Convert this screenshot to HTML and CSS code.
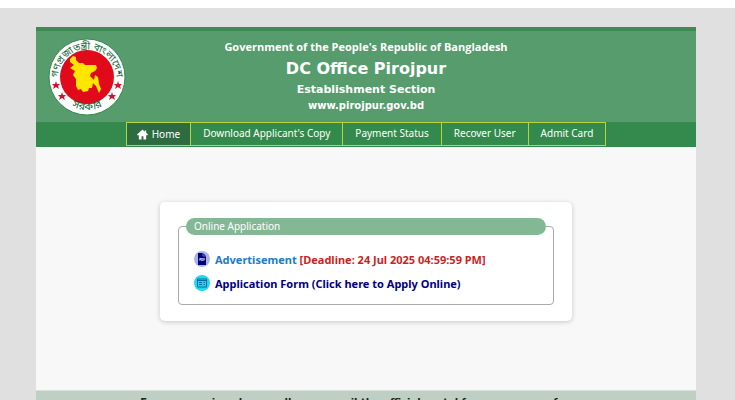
FILE: index.html
```html
<!DOCTYPE html>
<html lang="en">

<head>
    <meta charset="UTF-8">
    <title>DC Office Pirojpur</title>
    <link rel="stylesheet" href="styles.css">
</head>

<body>
    <div class="wrapper">
        <header class="header">
            <svg class="logo" viewBox="0 0 78 78" role="img" aria-label="Government seal of Bangladesh">
                <defs>
                    <path id="arc-top" d="M12 51 A29 29 0 1 1 66 51" />
                    <path id="arc-bottom" d="M14 61 A34 34 0 0 0 64 61" />
                </defs>
                <circle cx="39" cy="39" r="38" fill="#fff" stroke="#3d8a54" stroke-width="1" />
                <circle cx="39" cy="39" r="27" fill="#e00a1a" />
                <path d="M22 21 L25 18 L28 19 L28 22 L31 25 L35 25 L37 27 L48 27 L49 30 L47 33 L43 35 L42 38 L46 42 L47 37 L50 39 L51 46 L53 51 L51 55 L48 48 L45 45 L44 50 L41 50 L40 53 L35 54 L33 51 L30 52 L28 48 L28 41 L25 37 L27 33 L22 30 L26 27 L22 24 Z" fill="#ffe600" />
                <g class="seal-text">
                    <text><textPath href="#arc-top" startOffset="50%">গণপ্রজাতন্ত্রী বাংলাদেশ</textPath></text>
                    <text class="seal-bottom"><textPath href="#arc-bottom" startOffset="50%">সরকার</textPath></text>
                </g>
                <g fill="#d3122a">
                    <path id="star" d="M8 43 L9 46 L12 46 L10 48 L11 51 L8 49 L5 51 L6 48 L4 46 L7 46 Z" />
                    <use href="#star" x="6" y="11" />
                    <use href="#star" x="62" />
                    <use href="#star" x="56" y="11" />
                </g>
            </svg>
            <div class="header-text">
                <div class="gov">Government of the People's Republic of Bangladesh</div>
                <h1>DC Office Pirojpur</h1>
                <h2>Establishment Section</h2>
                <div class="site">www.pirojpur.gov.bd</div>
            </div>
        </header>

        <nav class="menu">
            <a class="active" href="#">
                <svg class="home-icon" viewBox="0 0 24 24">
                    <path d="M12 1 L0 12 L2 14 L4 13 V23 H10 V16 H14 V23 H20 V13 L22 14 L24 12 L20 8 V3 H17 V6 Z" fill="#fff" />
                </svg>
                Home
            </a>
            <a href="#">Download Applicant's Copy</a>
            <a href="#">Payment Status</a>
            <a href="#">Recover User</a>
            <a href="#">Admit Card</a>
        </nav>

        <main class="content">
            <div class="card">
                <fieldset class="application">
                    <legend>Online Application</legend>
                    <a class="item advert" href="#">
                        <svg class="item-icon" viewBox="0 0 16 16">
                            <circle cx="8" cy="8" r="8" fill="#a9b4e6" />
                            <path d="M4 2 H9 L12 5 V14 H4 Z" fill="#00007c" />
                            <path d="M9 2 V5 H12" fill="none" stroke="#a9b4e6" stroke-width=".6" />
                            <text class="pdf" x="8" y="10">PDF</text>
                        </svg>
                        <span>Advertisement <span class="deadline">[Deadline: 24 Jul 2025 04:59:59 PM]</span></span>
                    </a>
                    <a class="item" href="#">
                        <svg class="item-icon" viewBox="0 0 16 16">
                            <circle cx="8" cy="8" r="8" fill="#1fd8ea" />
                            <path d="M3.500 4 H12.500 V12 H3.500 Z M3.500 5.500 H12.500 M5 7.500 H8 M5 9.500 H8 M9.500 7.500 H11 M9.500 9.500 H11" fill="none" stroke="#0b5c9c" stroke-width=".9" />
                        </svg>
                        <span>Application Form (Click here to Apply Online)</span>
                    </a>
                </fieldset>
            </div>
        </main>

        <footer class="footer">For any queries please call us or email the official portal for more news of users</footer>
    </div>
</body>

</html>
```
FILE: styles.css
```css
* {
    box-sizing: border-box;
}

body {
    margin: 0;
    height: 100vh;
    overflow: hidden;
    padding: 19px 39px 0 36px;
    border-top: 8px solid #fff;
    background: linear-gradient(#d6dfe8, #e0e0e0 5px) no-repeat #e0e0e0;
    background-origin: border-box;
    font-family: "DejaVu Sans", Verdana, sans-serif;
}

a {
    text-decoration: none;
}

.wrapper {
    display: flex;
    flex-direction: column;
    background-color: #f8f8f8;
}

.header {
    display: grid;
    grid-template-columns: 78px 1fr 78px;
    align-items: center;
    padding: 7px 12px 6px;
    border-top: 4px solid #3d8a54;
    background-color: #569c6d;
    color: #fff;
    text-align: center;
    font-weight: bold;
}

.header-text {
    padding-bottom: 2px;
}

.logo {
    width: 78px;
    height: 78px;
}

.seal-text {
    font-family: "Noto Sans Bengali", "Noto Sans", sans-serif;
    font-size: 10px;
    font-weight: normal;
    text-anchor: middle;
    fill: #14683c;
}

.seal-bottom {
    font-size: 11px;
}

.gov,
.site {
    font-size: 10px;
    line-height: 14px;
}

.gov {
    font-family: "Open Sans", "Noto Sans", sans-serif;
    font-size: 11px;
}

h1 {
    margin: 5px 0 4px;
    font-size: 16px;
    line-height: 20px;
}

h2 {
    margin: 0 0 2px;
    font-size: 11px;
    line-height: 14px;
}

.menu {
    display: flex;
    justify-content: center;
    padding-bottom: 1px;
    background-color: #338a4c;
}

.menu a {
    display: flex;
    align-items: center;
    height: 24px;
    padding: 0 12px 2px;
    border: 1px solid #b8d63c;
    border-left-width: 0;
    color: #fff;
    font-family: "Noto Sans", sans-serif;
    font-size: 10px;
}

.menu .active {
    gap: 4px;
    padding: 0 10px;
    border-left-width: 1px;
    background-color: #2d6b40;
}

.home-icon {
    width: 11px;
    height: 11px;
}

.content {
    padding: 55px 124px 69px;
}

.card {
    padding: 16px 18px;
    border-radius: 5px;
    background-color: #fff;
    box-shadow: 0 1px 5px rgba(0, 0, 0, 0.2);
}

.application {
    margin: 0;
    padding: 12px 7px 9px;
    border: 1px solid #aaa;
    border-radius: 4px;
}

legend {
    width: 100%;
    padding: 0 8px;
    border-radius: 9px;
    background-color: #84b894;
    color: #fff;
    font-family: "Noto Sans", sans-serif;
    font-size: 10px;
    line-height: 17px;
}

.item {
    display: flex;
    align-items: center;
    gap: 5px;
    height: 24px;
    padding-left: 8px;
    color: #000080;
    font-family: "Noto Sans", sans-serif;
    font-size: 11px;
    font-weight: bold;
}

.advert {
    color: #1b7bc9;
}

.deadline {
    color: #cc1f1f;
}

.item-icon {
    flex: none;
    width: 16px;
    height: 16px;
}

.pdf {
    font-size: 3px;
    text-anchor: middle;
    fill: #fff;
}

.footer {
    padding: 5px 0;
    border-top: 1px solid #d5e3d9;
    background-color: #bfcfc3;
    color: #222;
    font-size: 10px;
    font-weight: bold;
    line-height: 14px;
    text-align: center;
}
```
